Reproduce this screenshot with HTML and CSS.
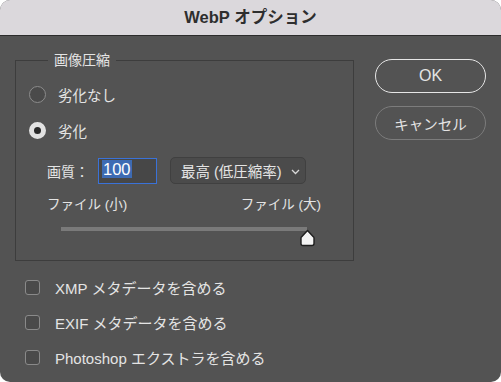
FILE: index.html
```html
<!DOCTYPE html>
<html lang="ja">
<head>
  <meta charset="UTF-8">
  <title>WebP オプション</title>
  <link rel="stylesheet" href="styles.css">
</head>
<body>
  <div class="dialog">
    <!-- Title bar -->
    <div class="titlebar">WebP オプション</div>

    <div class="content">
      <div class="main-col">
        <fieldset class="group">
          <legend class="group-title">画像圧縮</legend>

          <label class="radio-row">
            <span class="radio"></span>
            劣化なし
          </label>
          <label class="radio-row">
            <span class="radio checked"></span>
            劣化
          </label>

          <div class="quality">
            <div class="quality-row">
              <span class="quality-label">画質：</span>
              <div class="quality-input"><span class="selected">100</span></div>
              <div class="select">
                <span class="select-text">最高 (低圧縮率)</span>
                <svg class="chevron" width="9" height="6" viewBox="0 0 9 6">
                  <path d="M1 1 L4.5 4.5 L8 1" fill="none" stroke="#d8d8d8" stroke-width="1.3"/>
                </svg>
              </div>
            </div>
            <div class="size-labels">
              <span>ファイル (小)</span>
              <span>ファイル (大)</span>
            </div>
            <div class="slider">
              <div class="track"></div>
              <svg class="thumb" width="17" height="18" viewBox="0 0 17 18">
                <path d="M8.5 1.5 L15 8.5 V14.5 Q15 16.5 13 16.5 H4 Q2 16.5 2 14.5 V8.5 Z" fill="#f4f4f4" stroke="#1e1e1e" stroke-width="1.4" stroke-linejoin="round"/>
              </svg>
            </div>
          </div>
        </fieldset>

        <div class="checks">
          <label class="check-row"><span class="checkbox"></span>XMP メタデータを含める</label>
          <label class="check-row"><span class="checkbox"></span>EXIF メタデータを含める</label>
          <label class="check-row"><span class="checkbox"></span>Photoshop エクストラを含める</label>
        </div>
      </div>

      <div class="buttons">
        <button class="btn btn-default">OK</button>
        <button class="btn">キャンセル</button>
      </div>
    </div>
  </div>
</body>
</html>
```

FILE: styles.css
```css
:root {
  --panel: #535353;
  --text: #e4e4e4;
  --field: #474747;
  --border-dark: #3d3d3d;
  --blue: #3a72d8;
}

* {
  margin: 0;
  padding: 0;
  box-sizing: border-box;
}

body {
  background-color: #ffffff;
  font-family: 'Liberation Sans', 'Noto Sans CJK JP', sans-serif;
  color: var(--text);
  font-size: 14px;
}

.dialog {
  width: 501px;
  height: 382px;
  background-color: var(--panel);
  border-radius: 10px;
  overflow: hidden;
}

.titlebar {
  height: 36px;
  background-color: #dbd8dc;
  border-bottom: 1px solid #2c2c2c;
  color: #2e2e2e;
  font-size: 16.5px;
  font-weight: 700;
  display: flex;
  align-items: center;
  justify-content: center;
  padding-bottom: 3px;
}

.content {
  display: flex;
  padding: 14px 0 0 15px;
}

.main-col {
  width: 339px;
}

/* Compression group box */
.group {
  border: 1px solid var(--border-dark);
  height: 211px;
  padding: 14px 0 0 13px;
}

.group-title {
  margin-left: 19px;
  padding: 0 6px;
  line-height: 20px;
  font-size: 14px;
}

.radio-row {
  display: flex;
  align-items: center;
  gap: 12px;
  height: 20px;
  margin-bottom: 16px;
  font-size: 14.5px;
}

.radio {
  width: 17px;
  height: 17px;
  border-radius: 50%;
  border: 1.5px solid #8c8c8c;
  background-color: #4a4a4a;
}

.radio.checked {
  border: 5px solid #e2e2e2;
  background-color: #2a2a2a;
}

.quality {
  padding: 1px 0 0 18px;
}

.quality-row {
  display: flex;
  align-items: center;
  height: 27px;
}

.quality-label {
  width: 51px;
}

.quality-input {
  width: 59px;
  height: 26px;
  border: 1.5px solid var(--blue);
  background-color: var(--field);
  padding: 1px 0 0 3px;
  font-size: 16.5px;
}

.selected {
  background-color: #3d6bb3;
  color: #ffffff;
  padding: 0 1px;
}

.select {
  margin-left: 13px;
  width: 136px;
  height: 27px;
  border: 1px solid #404040;
  border-radius: 5px;
  background-color: #4b4b4b;
  display: flex;
  align-items: center;
  padding-left: 10px;
  gap: 9px;
  font-size: 14.5px;
  white-space: nowrap;
}

.chevron {
  flex-shrink: 0;
  margin-top: 2px;
}

.size-labels {
  display: flex;
  justify-content: space-between;
  width: 274px;
  margin-top: 11px;
  line-height: 20px;
  font-size: 13.5px;
}

.slider {
  position: relative;
  margin: 12px 0 0 14px;
  width: 246px;
  height: 20px;
}

.track {
  height: 4px;
  background-color: #7a7a7a;
}

.thumb {
  position: absolute;
  left: 238px;
  top: 2px;
}

/* Metadata checkboxes */
.checks {
  padding: 16px 0 0 10px;
  display: flex;
  flex-direction: column;
  gap: 15px;
}

.check-row {
  display: flex;
  align-items: center;
  gap: 15px;
  height: 20px;
  font-size: 15px;
}

.checkbox {
  width: 15px;
  height: 15px;
  border: 1.5px solid #8a8a8a;
  border-radius: 3px;
  background-color: #4a4a4a;
}

/* Buttons */
.buttons {
  display: flex;
  flex-direction: column;
  gap: 13px;
  margin: 9px 0 0 21px;
}

.btn {
  width: 111px;
  height: 34px;
  border-radius: 17px;
  border: 1.5px solid #7c7c7c;
  background-color: transparent;
  color: var(--text);
  font-family: inherit;
  font-size: 14.5px;
}

.btn-default {
  border-color: #e6e6e6;
  font-size: 16px;
}
```
